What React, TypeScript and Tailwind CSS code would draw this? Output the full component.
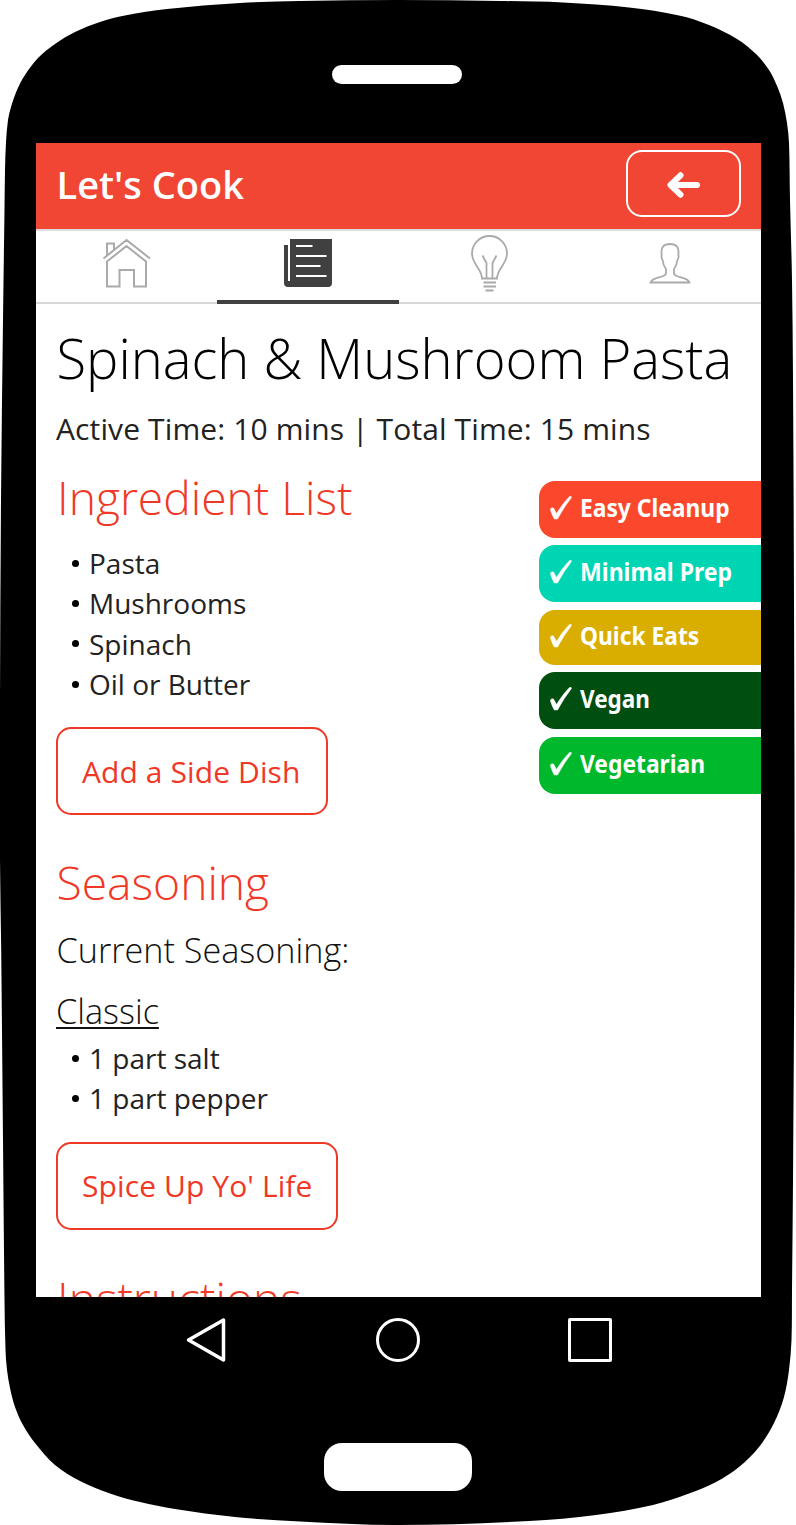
import React from "react";

const tags = [
  { label: "Easy Cleanup", box: "h-[56.5px] bg-[#fb472b]", scale: "scale-x-[0.912]" },
  { label: "Minimal Prep", box: "mt-[7.5px] h-[57px] bg-[#00d5b3]", scale: "scale-x-[0.922]" },
  { label: "Quick Eats", box: "mt-[8px] h-[54.5px] bg-[#d9ae00]", scale: "scale-x-[0.912]" },
  { label: "Vegan", box: "mt-[7.5px] h-[57px] bg-[#004e10]", scale: "scale-x-[0.9]" },
  { label: "Vegetarian", box: "mt-[8px] h-[56.5px] bg-[#00b82c]", scale: "scale-x-[0.912]" },
];

const outline: [number, number][] = [
  [398, 0], [300, 1], [240, 3], [167, 9], [125, 15.5], [100, 22], [75, 32], [55, 44], [38, 58], [25, 75], [17, 90], [11, 107],
  [8, 120], [6, 142], [5, 170], [4.5, 210], [3, 320], [1, 500], [0, 700], [0, 860], [1.2, 950], [3, 1140], [4.5, 1300],
  [5.5, 1350], [7, 1370], [10, 1388], [15, 1407], [23, 1425], [35, 1443], [55, 1465], [80, 1481], [110, 1493.5], [140, 1502],
  [175, 1509], [235, 1517], [300, 1521.5], [398, 1525], [529, 1521], [596, 1515], [653, 1505], [689, 1493.5], [716, 1482],
  [739, 1467], [759, 1447], [774, 1423], [784, 1397], [789, 1370], [791.5, 1340], [792, 1290], [793, 1180], [794.5, 900],
  [794, 600], [793, 380], [792, 280], [790, 200], [789, 143], [787, 123], [783, 103], [777.5, 87], [769, 70], [756, 54],
  [737, 39], [709, 25], [679, 15.5], [629, 7.5], [563, 2.5], [500, 1],
];

function smoothPath(points: [number, number][]) {
  const n = points.length;
  const at = (i: number) => points[(i + n) % n];
  let d = "M" + points[0].join(" ");
  for (let i = 0; i < n; i++) {
    const [a, b, c, e] = [at(i - 1), at(i), at(i + 1), at(i + 2)];
    const chord = Math.hypot(c[0] - b[0], c[1] - b[1]);
    const t1 = chord / (3 * Math.hypot(c[0] - a[0], c[1] - a[1]));
    const t2 = chord / (3 * Math.hypot(e[0] - b[0], e[1] - b[1]));
    d += `C${b[0] + (c[0] - a[0]) * t1} ${b[1] + (c[1] - a[1]) * t1} ${c[0] - (e[0] - b[0]) * t2} ${c[1] - (e[1] - b[1]) * t2} ${c[0]} ${c[1]}`;
  }
  return d + "Z";
}

function Bullets({ items }: { items: string[] }) {
  return (
    <ul className="text-[28px] leading-[40.3px] text-[#222]">
      {items.map((t) => (
        <li key={t} className="flex items-center pl-[16px]">
          <span className="mr-[10px] h-[7px] w-[7px] rounded-full bg-black" />
          {t}
        </li>
      ))}
    </ul>
  );
}

function OutlineButton({ children, className }: { children: React.ReactNode; className: string }) {
  return (
    <button className={"block h-[88px] rounded-[15px] border-2 border-[#f03826] pl-[24px] text-left text-[30px] tracking-[0.1px] text-[#f03826] " + className}>
      {children}
    </button>
  );
}

export default function App() {
  return (
    <div className="relative h-[1525px] w-[796px] overflow-hidden bg-white font-['Open_Sans',sans-serif] whitespace-nowrap">
      <svg className="absolute inset-0" width="796" height="1525" viewBox="0 0 796 1525">
        <path d={smoothPath(outline)} fill="#000" />
      </svg>
      <div className="relative flex h-full flex-col">
        <div className="flex h-[143px] justify-center pt-[65px] pr-[3px]">
          <div className="h-[19px] w-[130px] rounded-full bg-white" />
        </div>
        <main className="ml-[36px] flex h-[1154px] w-[725px] flex-col overflow-hidden bg-white">
          <header className="flex h-[86px] shrink-0 items-start justify-between bg-[#f04633] pr-[20px] pl-[20.5px]">
            <h1 className="pt-[13px] text-[38px] leading-[56px] font-semibold text-white">Let's Cook</h1>
            <button className="mt-[7px] flex h-[67px] w-[115px] items-center justify-center rounded-[16px] border-2 border-white pt-[2px]">
              <svg width="34" height="28" viewBox="0 0 34 28" fill="none" stroke="#fff" strokeWidth="6" strokeLinecap="round" strokeLinejoin="round">
                <path d="M30 14H4M13.500 4.300L3.500 14L13.500 23.700" />
              </svg>
            </button>
          </header>
          <nav className="grid h-[75px] shrink-0 grid-cols-4 border-t-2 border-[#ddd] shadow-[inset_0_-2px_0_#d8d8d8]">
            <a className="flex justify-center">
              <svg width="50" height="50" className="mt-[7px]" viewBox="0 0 50 50" fill="none" stroke="#aaa" strokeWidth="2">
                <path d="M1.500 20.500L24.500 2L48 20.500M5 17.500V5.500H12V11.500M24.500 8L5 23.500V48.500H17.500V32H32V48.500H44V23.500Z" />
              </svg>
            </a>
            <a className="flex justify-center border-b-[4px] border-[#404040]">
              <svg width="50" height="50" className="mt-[7px]" viewBox="0 0 50 50" fill="none">
                <path d="M1 7H5V43H7V1H49V45Q49 49 45 49H5Q1 49 1 45Z" fill="#404040" />
                <path d="M13 8H29.500M13 18H43.500M13 28H37.500M13 38H43.500" stroke="#fff" strokeWidth="2" />
              </svg>
            </a>
            <a className="flex justify-center">
              <svg width="40" height="60" className="mt-[3px]" viewBox="0 0 40 60" fill="none" stroke="#aaa" strokeWidth="1.800">
                <path d="M13 44.500H28C28 35 38 30 38 19.500A17.500 17.500 0 0 0 3 19.500C3 30 13 35 13 44.500ZM13.500 21.500L17.500 29V44M27.500 21.500L23.500 29V44M14.500 48.500H27M14.500 52.500H27M16.500 56.500H24.500" />
              </svg>
            </a>
            <a className="flex justify-center">
              <svg width="42" height="44" className="mt-[10px]" viewBox="0 0 42 44" fill="none" stroke="#aaa" strokeWidth="1.800">
                <path d="M1.500 41.500H40.500C39.500 37.500 34 36.800 29 35.500C25.500 34.500 25 33.500 25 32V28C27 25.500 28 23 28.300 19.500C29.800 17 30 15.500 29.300 13.500C30.500 6 27 3 21 3S11.500 6 12.700 13.500C12 15.500 12.200 17 13.700 19.500C14 23 15 25.500 17 28V32C17 33.500 16.500 34.500 13 35.500C8 36.800 2.500 37.500 1.500 41.500Z" />
              </svg>
            </a>
          </nav>
          <section className="flex flex-col pt-[18px] pl-[20px]">
            <h2 className="pl-[0.5px] text-[54.3px] leading-[72px] font-light text-black">Spinach &amp; Mushroom Pasta</h2>
            <p className="mt-[15px] text-[30px] leading-[40px] tracking-[0.12px] text-[#222]">Active Time: 10 mins | Total Time: 15 mins</p>
            <div className="flex justify-between">
              <div className="pt-[19px]">
                <h3 className="mb-[15px] pl-[1px] text-[46.2px] leading-[60px] font-light text-[#f03826]">Ingredient List</h3>
                <Bullets items={["Pasta", "Mushrooms", "Spinach", "Oil or Butter"]} />
                <OutlineButton className="mt-[23px] w-[272px] leading-[81px]">Add a Side Dish</OutlineButton>
              </div>
              <ul className="w-[222px] pt-[32px] text-[25px] font-bold text-white">
                {tags.map((t) => (
                  <li key={t.label} className={"flex items-center rounded-l-[16px] pl-[10.5px] pb-[3px] " + t.box}>
                    <svg width="22" height="24" viewBox="0 0 22 24" className="mr-[8px]" fill="#fff" stroke="#fff" strokeWidth="0.500">
                      <path d="M0.300 13.500Q1 11 3.500 12L6.500 17.500Q13 7 19.500 0.500Q21.500 -0.300 21.500 1.500Q14 11 7.500 23L4.300 23Q2 19 0.300 13.500Z" />
                    </svg>
                    <span className={"origin-left font-['Noto_Sans'] " + t.scale}>{t.label}</span>
                  </li>
                ))}
              </ul>
            </div>
            <h3 className="mt-[38px] pl-[0.5px] text-[46.2px] leading-[60px] font-light text-[#f03826]">Seasoning</h3>
            <h4 className="mt-[14px] pl-[0.5px] text-[34.2px] leading-[46px] font-light text-[#111]">Current Seasoning:</h4>
            <h4 className="mt-[15px] mb-[4px] text-[34.2px] leading-[46px] font-light text-[#111] underline decoration-2 underline-offset-[3px]">Classic</h4>
            <Bullets items={["1 part salt", "1 part pepper"]} />
            <OutlineButton className="mt-[23px] w-[282px] leading-[82px]">Spice Up Yo' Life</OutlineButton>
            <h3 className="mt-[39px] pl-[1px] text-[46.2px] leading-[60px] font-light text-[#f03826]">Instructions</h3>
          </section>
        </main>
        <footer className="flex flex-col items-center">
          <div className="mt-[20px] ml-[2px] flex w-[426px] items-center justify-between">
            <svg width="41" height="46" viewBox="0 0 41 46" fill="none" stroke="#fff" strokeWidth="3.500" strokeLinejoin="round"><path d="M37.500 3V43L2.500 23Z" /></svg>
            <div className="h-[44px] w-[44px] rounded-full border-[3.500px] border-white" />
            <div className="h-[44px] w-[44px] rounded-[2px] border-[3.500px] border-white" />
          </div>
          <div className="mt-[80px] h-[48px] w-[148px] rounded-[18px] bg-white" />
        </footer>
      </div>
    </div>
  );
}
